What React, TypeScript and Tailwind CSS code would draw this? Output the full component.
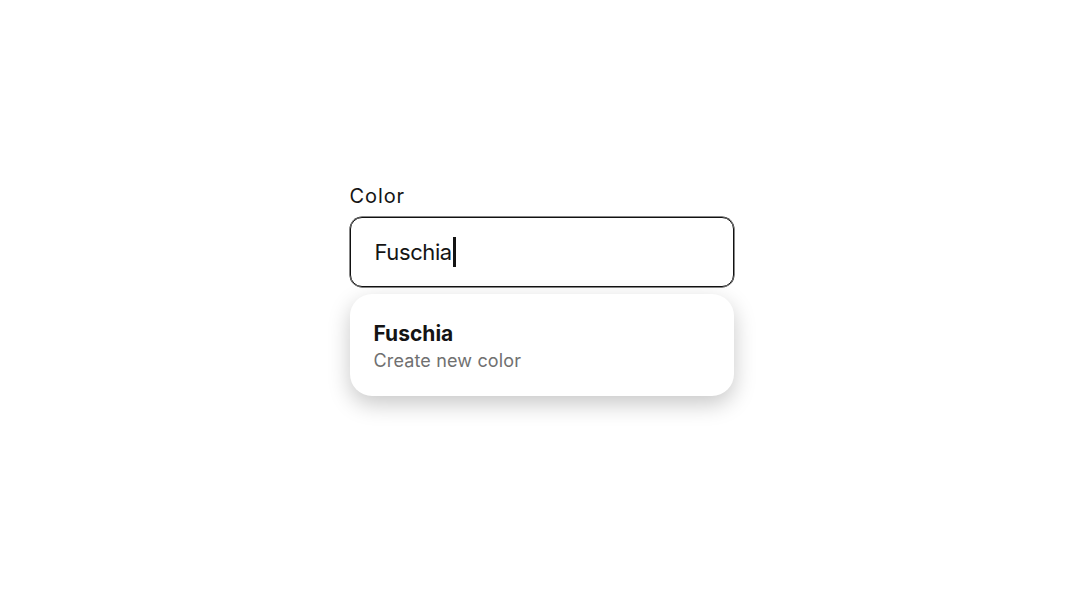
export default function App() {
  return (
    <div className="min-h-screen w-full bg-white font-['Inter',sans-serif] text-[#141414]">
      <div className="mx-auto w-[384px] pt-[182px]">
        {/* Label */}
        <label className="block text-[20px] leading-[28px] tracking-[0.9px]">Color</label>

        {/* Input */}
        <div className="mt-[7px] flex h-[70px] items-center rounded-[12px] border-[1.5px] border-[#111] px-6 shadow-[0_0_0_0.5px_#111]">
          <span className="text-[22px] leading-[30px] tracking-[-0.4px]">Fuschia</span>
          <span className="ml-[1px] h-[30px] w-[3px] bg-[#141414]" />
        </div>

        {/* Suggestion dropdown */}
        <div className="mt-[7px] rounded-[22px] bg-white px-6 pb-[23px] pt-[27px] shadow-[0_8px_22px_rgba(0,0,0,0.22)]">
          <div className="text-[21px] font-bold leading-[26px]">Fuschia</div>
          <div className="mt-[2px] text-[18px] leading-[24px] tracking-[0.15px] text-[#707070]">Create new color</div>
        </div>
      </div>
    </div>
  );
}
